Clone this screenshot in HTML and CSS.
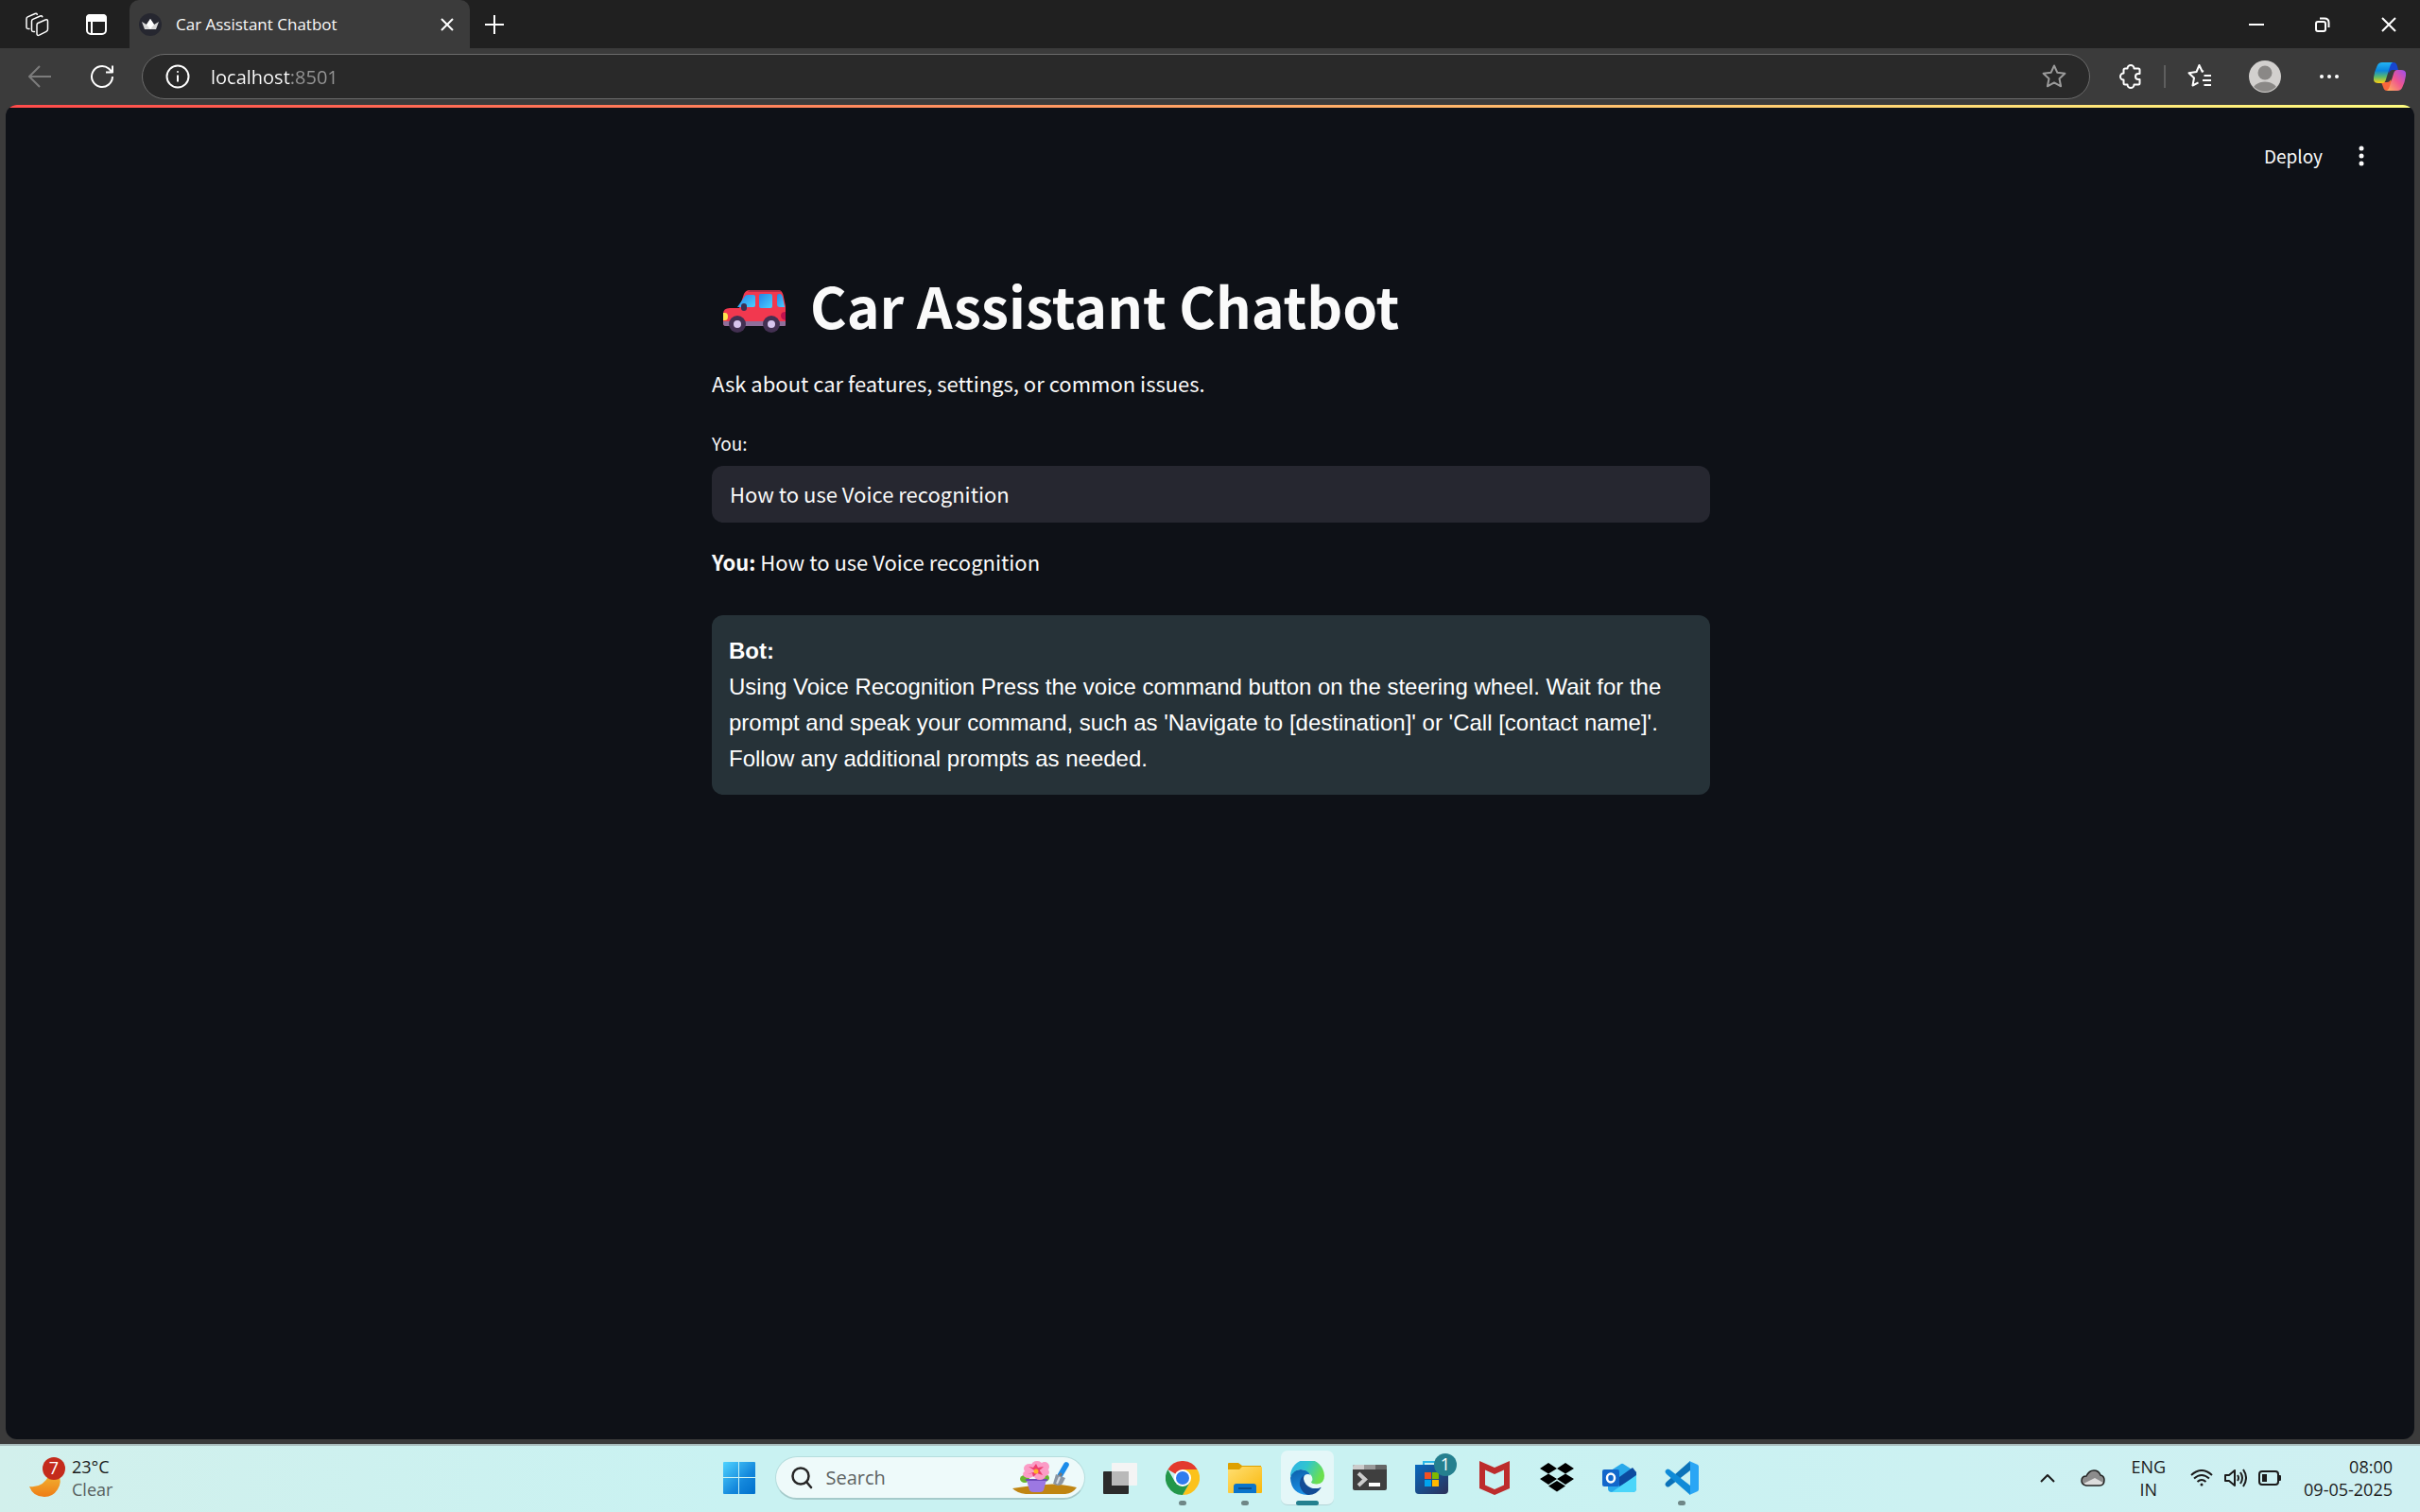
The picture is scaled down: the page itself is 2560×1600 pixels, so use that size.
FILE: index.html
```html
<!DOCTYPE html>
<html lang="en">
<head>
<meta charset="utf-8">
<title>Car Assistant Chatbot</title>
<link rel="stylesheet" href="styles.css">
</head>
<body>
<header class="browser">
  <div class="titlebar">
    <div class="tab-tools">
      <button class="icon-btn" aria-label="Workspaces"><svg width="26" height="26" viewBox="0 0 26 26" class="line thin"><path d="M14 11.500 22 8q2.500-.8 2.500 1.500V18q0 1.600-1.500 2.300l-7.500 3.800q-2.500 1-2.500-1.500V13.500q0-1.400 1-2z" /><path d="M10.500 20.500Q7.500 21 7.500 18.500V9.500Q7.500 8 8.800 7.400L16.500 4q1.800-.6 2.300.8"/><path d="M5 17.500Q2 18 2 15.500V7q0-1.500 1.300-2.100L11 1.500q1.800-.6 2.300.8"/></svg></button>
      <button class="icon-btn" aria-label="Tab actions"><svg width="24" height="24" viewBox="0 0 24 24" class="line"><rect x="2" y="2" width="20" height="20" rx="4"/><path d="M2 8V5q0-3 3-3h14q3 0 3 3v3z" fill="#fff"/><path d="M7 8v14"/></svg></button>
    </div>
    <div class="tab">
      <svg width="24" height="24" viewBox="0 0 24 24"><circle cx="12" cy="12" r="12" fill="#262730"/><path d="M3 9l5 3 4-6 4 6 5-3-3 8H6z" fill="#d8d8d8"/><path d="M12 6l4 6-4 5-4-5z" fill="#fff"/></svg>
      <span class="tab-title">Car Assistant Chatbot</span>
      <button class="icon-btn" aria-label="Close tab"><svg width="14" height="14" viewBox="0 0 14 14" class="line"><path d="M1 1l12 12M13 1 1 13"/></svg></button>
    </div>
    <button class="icon-btn new-tab" aria-label="New tab"><svg width="22" height="22" viewBox="0 0 22 22" class="line"><path d="M11 1v20M1 11h20"/></svg></button>
    <div class="window-controls">
      <button class="icon-btn" aria-label="Minimize"><svg width="16" height="16" viewBox="0 0 16 16" class="line"><path d="M0 8h16"/></svg></button>
      <button class="icon-btn" aria-label="Restore"><svg width="16" height="16" viewBox="0 0 16 16" class="line"><rect x="1" y="5" width="10" height="10" rx="2"/><path d="M5 1.500h5Q14.500 1.500 14.500 6v5"/></svg></button>
      <button class="icon-btn" aria-label="Close window"><svg width="16" height="16" viewBox="0 0 16 16" class="line"><path d="M1 1l14 14M15 1 1 15"/></svg></button>
    </div>
  </div>
  <div class="toolbar">
    <div class="nav">
      <button class="icon-btn" aria-label="Back"><svg width="24" height="24" viewBox="0 0 24 24" class="line dim"><path d="M12 1 1 12l11 11M1 12h23"/></svg></button>
      <button class="icon-btn" aria-label="Refresh"><svg width="26" height="26" viewBox="0 0 26 26" class="line"><path d="M24 13a11 11 0 1 1-4-8.500L23.500 8M24 1.500V8.500h-7"/></svg></button>
    </div>
    <div class="address">
      <button class="icon-btn" aria-label="Site information"><svg width="26" height="26" viewBox="0 0 26 26" class="line"><circle cx="13" cy="13" r="11.500"/><path d="M13 11.500v7"/><circle cx="13" cy="8" r="1" fill="#fff" stroke="none"/></svg></button>
      <input class="url" type="text" value="localhost:8501" aria-label="Address">
      <button class="icon-btn" aria-label="Add to favorites"><svg width="26" height="26" viewBox="0 0 26 26" class="line grey"><path d="M13 1.500l3.400 7.300 8 1-5.900 5.500 1.600 8L13 19.400l-7.100 3.900 1.600-8L1.600 9.800l8-1z"/></svg></button>
    </div>
    <div class="actions">
      <button class="icon-btn" aria-label="Extensions"><svg width="26" height="26" viewBox="0 0 26 26" class="line"><path d="M9.500 4.500a3.500 3.500 0 0 1 7 0H21q1.500 0 1.500 1.500v4h-1.500a3 3 0 0 0 0 6h1.500v4q0 1.500-1.500 1.500h-4.500a3.500 3.500 0 0 1-7 0H7q-1.500 0-1.500-1.500v-3.500a3.500 3.500 0 0 1 0-7V6q0-1.500 1.500-1.500z"/></svg></button>
      <span class="separator"></span>
      <button class="icon-btn" aria-label="Favorites"><svg width="26" height="26" viewBox="0 0 26 26" class="line"><path d="M16 9.500 12.500 2 9.500 9l-8 1.200 5.500 5.300-1.500 8 6-3.200M17 8.800l-1-.6M17.500 13H25M16 18h9M17.500 23H25" transform="translate(0 -1)"/></svg></button>
      <button class="icon-btn" aria-label="Profile"><svg width="34" height="34" viewBox="0 0 34 34"><defs><clipPath id="av"><circle cx="17" cy="17" r="16"/></clipPath></defs><circle cx="17" cy="17" r="17" fill="#d2d0ce"/><circle cx="17" cy="13" r="7.500" fill="#8a8886"/><ellipse cx="17" cy="33" rx="13.500" ry="10.500" fill="#8a8886" clip-path="url(#av)"/></svg></button>
      <button class="icon-btn" aria-label="Settings and more"><svg width="20" height="6" viewBox="0 0 20 6" fill="#fff"><circle cx="2" cy="3" r="2"/><circle cx="10" cy="3" r="2"/><circle cx="18" cy="3" r="2"/></svg></button>
      <button class="icon-btn" aria-label="Copilot"><svg width="34" height="32" viewBox="0 0 34 32"><defs><linearGradient id="c1" x2="0" y2="1"><stop stop-color="#22b4f4"/><stop offset=".4" stop-color="#0b86dc"/><stop offset=".7" stop-color="#5dbb6b"/><stop offset="1" stop-color="#ffcf10"/></linearGradient><linearGradient id="c2" x1="1" x2="0" y2="1"><stop stop-color="#9b4df0"/><stop offset=".5" stop-color="#f0568f"/><stop offset="1" stop-color="#ffb45a"/></linearGradient></defs><path d="M17 1h4q3 0 4 4l1 4h-6q-3 0-4 4l-2-8z" fill="#1646cf"/><path d="M17 31h-3q-3 0-4-4l-2-5h6q3 0 4-3l2 5z" fill="#f8663c"/><path d="M9 1h11q-2 1-3 5l-4 13q-1 4-4 4H5q-6 0-5-6Q1 10 3.500 5 5 1 9 1z" fill="url(#c1)"/><path d="M25 31H14q2-1 3-5l4-13q1-4 4-4h4q6 0 5 6-1 7-3.500 12Q29 31 25 31z" fill="url(#c2)"/></svg></button>
    </div>
  </div>
</header>

<main class="viewport">
  <div class="decoration"></div>
  <div class="app-bar">
    <button class="deploy">Deploy</button>
    <button class="icon-btn" aria-label="Main menu"><svg width="6" height="22" viewBox="0 0 6 22" fill="#fafafa"><circle cx="3" cy="3" r="2.500"/><circle cx="3" cy="11" r="2.500"/><circle cx="3" cy="19" r="2.500"/></svg></button>
  </div>
  <div class="content">
    <h1 class="title">
      <svg class="car" width="66" height="46" viewBox="0 0 66 46"><defs><linearGradient id="gl" x2="1" y2="1"><stop stop-color="#2585e8"/><stop offset="1" stop-color="#4bd0ff"/></linearGradient></defs><path d="M28 1h30q4 0 5.500 5L66 18v20q0 1-2 1H3q-3 0-3-3V33q0-3 7-4h7L22 5q2-4 6-4z" fill="#f2384f"/><path d="M0 36V26q0-6 7-6h59v16z" fill="#f2384f"/><path d="M28 1h30q3 0 4 2H26z" fill="#b52c48"/><path d="M26 6h6q2 0 2 2v9q0 2-2 2H15L22.500 8q1-2 3.500-2z" fill="url(#gl)"/><rect x="38" y="5" width="14" height="15" rx="2" fill="url(#gl)"/><path d="M57 7q0-2 2-2h1q2 0 3 4l2 10h-5q-3 0-3-3z" fill="url(#gl)"/><rect x="19" y="15" width="6" height="8" rx="3" fill="#3b2f52"/><path d="M0 34h66v4q0 1-2 1H3q-3 0-3-3z" fill="#8f6f9b"/><path d="M0 25h2q3 0 3 4t-3 4H0z" fill="#ffe34d"/><path d="M66 24q-5 0-5 4t5 5z" fill="#c1114f"/><circle cx="15" cy="37" r="9" fill="#433052"/><circle cx="51" cy="37" r="9" fill="#433052"/><circle cx="15" cy="37" r="4" fill="#d8c5ee"/><circle cx="51" cy="37" r="4" fill="#d8c5ee"/></svg>
      <span>Car Assistant Chatbot</span>
    </h1>
    <p class="intro">Ask about car features, settings, or common issues.</p>
    <div class="field">
      <label for="question">You:</label>
      <input id="question" type="text" value="How to use Voice recognition">
    </div>
    <p class="echo"><strong>You:</strong> How to use Voice recognition</p>
    <div class="bot"><strong>Bot:</strong><br>Using Voice Recognition Press the voice command button on the steering wheel. Wait for the prompt and speak your command, such as 'Navigate to [destination]' or 'Call [contact name]'. Follow any additional prompts as needed.</div>
  </div>
</main>

<footer class="taskbar">
  <button class="weather">
    <svg width="40" height="46" viewBox="0 0 40 46"><defs><linearGradient id="mo" x2="0" y2="1"><stop stop-color="#f2b632"/><stop offset="1" stop-color="#ee7d16"/></linearGradient></defs><path d="M1 32q14 2 21-12l10-2q4 9-1 17-5 8-14 8-12 0-16-11z" fill="url(#mo)"/><circle cx="27" cy="13" r="12" fill="#c42b1c"/><text x="27" y="19" class="badge-text">7</text></svg>
    <span class="stack"><span>23°C</span><span class="soft">Clear</span></span>
  </button>
  <nav class="dock">
    <button class="slot" aria-label="Start"><svg width="36" height="36" viewBox="0 0 36 36"><defs><linearGradient id="st" x2="1" y2="1"><stop stop-color="#4fd3ff"/><stop offset=".6" stop-color="#1488dc"/><stop offset="1" stop-color="#0070cc"/></linearGradient></defs><path d="M2 1h15v16H1V2q0-1 1-1zM18 1h16q1 0 1 1v15H18zM1 18h16v17H2q-1 0-1-1zM18 18h17v16q0 1-1 1H18z" fill="url(#st)"/></svg></button>
    <div class="search">
      <svg width="24" height="24" viewBox="0 0 24 24" fill="none" stroke="#262626" stroke-width="2.500" stroke-linecap="round"><circle cx="11" cy="10" r="8.500"/><path d="M17 16l5 6"/></svg>
      <input type="text" placeholder="Search" aria-label="Search">
      <svg width="68" height="36" viewBox="0 0 68 36"><path d="M0 29q18-3 28-3 16-4 40 2-4 6-12 7H14Q5 34 0 29z" fill="#c08512"/><ellipse cx="13" cy="19" rx="5" ry="4" fill="#69b52f"/><ellipse cx="34" cy="18" rx="5" ry="4" fill="#69b52f"/><path d="M15 20h21l-3 11q-1 2-4 2h-7q-3 0-4-2z" fill="#9c78e2"/><path d="M14 19h23v2H14z" fill="#6d49b8"/><g fill="#fb9cc6"><ellipse cx="18" cy="8" rx="6" ry="5"/><ellipse cx="26" cy="5" rx="6" ry="5"/><ellipse cx="34" cy="6" rx="5" ry="5"/><ellipse cx="34" cy="12" rx="5" ry="4"/><ellipse cx="29" cy="16" rx="6" ry="4"/><ellipse cx="17" cy="14" rx="6" ry="4"/></g><path d="M25 11l-8-5 5 1 3-4 2 4 6-1-4 4 3 5-6-2-4 4-1-4-5 1z" fill="#ee3f70"/><circle cx="25" cy="11" r="2.500" fill="#ffb427"/><path d="M54 13l7-12" stroke="#1b8cea" stroke-width="6" stroke-linecap="round" transform="translate(-1 3) scale(.95)"/><path d="M52 13l-3 4" stroke="#777" stroke-width="3"/><path d="M46 14l10 4-3 6q-4 4-10 0z" fill="#8b96a3"/><path d="M50 17l-3 7" stroke="#d8dee5" stroke-width="2"/></svg>
    </div>
    <button class="slot" aria-label="Task view"><svg width="36" height="36" viewBox="0 0 36 36"><rect y="11" width="27" height="24" rx="1" fill="#2b2b2b"/><rect x="9" y="2" width="27" height="24" rx="1" fill="#f4f4f4"/><path d="M9 11h18v15H9z" fill="#b9b9b9"/></svg></button>
    <button class="slot running" aria-label="Chrome"><svg width="36" height="36" viewBox="0 0 36 36"><path d="M18 18 2.400 9A18 18 0 0 1 33.600 9z" fill="#e33b2e"/><path d="M18 9h15.600A18 18 0 0 1 18 36l7.800-13.500z" fill="#fcc21b"/><path d="M10.200 22.500 2.400 9A18 18 0 0 0 18 36l7.800-13.500z" fill="#23974a"/><circle cx="18" cy="18" r="9" fill="#fff"/><circle cx="18" cy="18" r="7" fill="#2f7bee"/></svg></button>
    <button class="slot running" aria-label="File Explorer"><svg width="36" height="36" viewBox="0 0 36 36"><defs><linearGradient id="fo" x2="1" y2="1"><stop stop-color="#ffdf73"/><stop offset="1" stop-color="#f9b80c"/></linearGradient></defs><path d="M0 3q0-1 1-1h10l4 3h20v5H0z" fill="#dea000"/><path d="M0 9h12l3-3h20q1 0 1 1v26q0 1-1 1H1q-1 0-1-1z" fill="url(#fo)"/><path d="M6 34V27q0-3 3-3h18q3 0 3 3v7z" fill="#0a74cb"/><path d="M11 29h14" stroke="#0b4d8a" stroke-width="2"/></svg></button>
    <button class="slot current" aria-label="Edge"><svg width="36" height="36" viewBox="0 0 36 36"><defs><linearGradient id="e1" x2="1" y2=".4"><stop stop-color="#2fb0ea"/><stop offset=".5" stop-color="#30c5cf"/><stop offset="1" stop-color="#6be04e"/></linearGradient><linearGradient id="e2" x2=".3" y2="1"><stop stop-color="#0c5ea8"/><stop offset="1" stop-color="#1b90e6"/></linearGradient></defs><path d="M0 18Q1 9 11 9q9 0 10 6-5 0-7 4 0 9 9 15-2 2-5 2Q1 35 0 18z" fill="url(#e2)"/><path d="M14 15q-5 5-4 11 2 8 9 10 9 0 14-8.500Q28 30 23 28q-8-3-9-13z" fill="#114b96"/><path d="M0 17A18 18 0 0 1 36 15.500Q36 24 28 24.500q-5 0-6-1.500 0-1 1-2 1-2-.5-5Q18 9 11 9 4 9 0 17z" fill="url(#e1)"/><path d="M14 19q0-5 4.500-5 3.500 0 4 4 0 2-1 3-.5 2 2.500 3 6 2 9.500 1.500 1 1-.5 2Q27 30 22 28.500q-7-3-8-9.500z" fill="#e8f8f8"/></svg></button>
    <button class="slot" aria-label="Terminal"><svg width="36" height="36" viewBox="0 0 36 36"><rect y="4" width="36" height="27" rx="2" fill="#3f3f3f"/><path d="M2 4h10v5H0V6q0-2 2-2z" fill="#ccc"/><path d="M12 4h12v5H12z" fill="#999"/><path d="M24 4h10q2 0 2 2v3H24z" fill="#666"/><path d="M6 13l7 6.500L6 26" fill="none" stroke="#ccc" stroke-width="4"/><path d="M17 23h12v4H17z" fill="#fff"/></svg></button>
    <button class="slot badged" aria-label="Microsoft Store"><svg width="36" height="36" viewBox="0 8 36 36"><defs><linearGradient id="ms" x2="1" y2="1"><stop stop-color="#0869be"/><stop offset="1" stop-color="#2b3058"/></linearGradient></defs><path d="M9 16V9h17v7" fill="none" stroke="#2bb8ea" stroke-width="2"/><path d="M0 12h35v27q0 4-4 4H4q-4 0-4-4z" fill="url(#ms)"/><path d="M10 20h7v7h-7z" fill="#f25022"/><path d="M18 20h7v7h-7z" fill="#7fba00"/><path d="M10 28h7v7h-7z" fill="#00a4ef"/><path d="M18 28h7v7h-7z" fill="#ffb900"/><circle cx="32" cy="12" r="12" fill="#25808f"/><text x="32" y="18" class="badge-text">1</text></svg></button>
    <button class="slot" aria-label="McAfee"><svg width="32" height="36" viewBox="0 0 32 36"><path fill-rule="evenodd" d="M0 0l16 7L32 0v29l-16 7-16-7zM6 9.500v16l10 4.500 10-4.500v-16L16 14z" fill="#bd2c2c"/></svg></button>
    <button class="slot" aria-label="Dropbox"><svg width="36" height="36" viewBox="0 0 36 36"><path d="M9 2l9 6-9 5.500L0 8zM27 2l9 6-9 5.500L18 8zM9 13.500l9 5.500-9 6-9-6zM27 13.500l9 5.500-9 6-9-6zM18 21l9 5.500-9 6-9-6z"/></svg></button>
    <button class="slot" aria-label="Outlook"><svg width="36" height="36" viewBox="0 0 36 36"><path d="M6 12 20 3q1-.6 2 0l14 9v17q0 4-4 4H10q-4 0-4-4z" fill="#29a9ea"/><path d="M18 17 32 7l4 5v5L18 27z" fill="#0c4ba0"/><path d="M36 15v14q0 4-4 4H10z" fill="#4bd6fa"/><rect y="9" width="18" height="18" rx="2" fill="#1267cb"/><ellipse cx="9" cy="18" rx="4" ry="4.500" fill="none" stroke="#fff" stroke-width="2.500"/></svg></button>
    <button class="slot running" aria-label="Visual Studio Code"><svg width="36" height="36" viewBox="0 0 36 36"><path d="M2 22q-3 3 0 5 1 1 3 0L27 10V0z" fill="#0b72b9"/><path d="M2 14q-3-3 0-5 1-1 3 0l22 17v10z" fill="#0f8bd8"/><path d="M26 0l9 4q1 1 1 2v24q0 1-1 2l-9 4q1-1 1-3V3z" fill="#2aa6f5"/></svg></button>
  </nav>
  <div class="tray">
    <button class="icon-btn" aria-label="Show hidden icons"><svg width="16" height="10" viewBox="0 0 16 10" class="ink"><path d="M1 9l7-7 7 7"/></svg></button>
    <button class="icon-btn" aria-label="OneDrive"><svg width="26" height="18" viewBox="0 0 26 18"><path d="M6 17q-5-1-5-5 0-5 5-5 3-6 8-6t7 5q4 1 4 5 0 6-5 6z" fill="#8c8c8c"/><path d="M3 15l12-6 9 5q-1 3-4 3H6z" fill="#ddd"/><path d="M6 17q-5-1-5-5 0-5 5-5 3-6 8-6t7 5q4 1 4 5 0 6-5 6z" fill="none" stroke="#222" stroke-width="1.500"/></svg></button>
    <button class="stack lang"><span>ENG</span><span>IN</span></button>
    <button class="status" aria-label="Network, volume and battery">
      <svg width="24" height="18" viewBox="0 0 24 18" class="ink"><path d="M1 6q11-10 22 0M4 9.500q8-7 16 0M7.500 13q4.500-4 9 0"/><circle cx="12" cy="16" r="1.500" fill="#1b1b1b" stroke="none"/></svg>
      <svg width="24" height="20" viewBox="0 0 24 20" class="ink"><path d="M1 7h4l6-5v16l-6-5H1zM14 7q2 3 0 6M17 4q4 6 0 12M20 1q6 9 0 18"/></svg>
      <svg width="24" height="16" viewBox="0 0 24 16" class="ink"><rect x="1" y="1" width="20" height="14" rx="3"/><path d="M4 4h5v8H4z" fill="#1b1b1b" stroke="none"/><path d="M22 6h1v4h-1z"/></svg>
    </button>
    <button class="stack clock"><span>08:00</span><span>09-05-2025</span></button>
  </div>
</footer>
</body>
</html>
```
FILE: styles.css
```css
* { box-sizing: border-box; }
body {
  margin: 0;
  min-height: 100vh;
  display: flex;
  flex-direction: column;
  background: #3b3b3b;
  color: #fafafa;
  font-family: "Open Sans", "Noto Sans", sans-serif;
}
button, input { font: inherit; color: inherit; border: 0; background: none; padding: 0; outline: 0; }
svg { display: block; flex: none; }
.line { fill: none; stroke: #fff; stroke-width: 2; stroke-linejoin: round; }
.thin { stroke-width: 1.5; stroke-linecap: round; }
.dim { stroke: #7c7c7c; }
.grey { stroke: #9a9a9a; }
.ink { fill: none; stroke: #1b1b1b; stroke-width: 2; stroke-linejoin: round; }
.icon-btn { display: flex; align-items: center; justify-content: center; }

/* Browser chrome */
.titlebar { display: flex; align-items: center; height: 51px; background: #202020; }
.tab-tools { display: flex; gap: 38px; padding: 0 23px 0 26px; }
.tab {
  display: flex;
  align-items: center;
  align-self: stretch;
  width: 360px;
  padding: 0 17px 0 10px;
  gap: 15px;
  background: #3b3b3b;
  border-radius: 10px 10px 0 0;
}
.tab-title { flex: 1; font-size: 17px; white-space: nowrap; }
.new-tab { margin-left: 15px; }
.window-controls { display: flex; gap: 54px; margin-left: auto; padding-right: 25px; }
.toolbar { display: flex; align-items: center; height: 60px; padding-left: 30px; background: #3b3b3b; }
.nav { display: flex; align-items: center; gap: 41px; }
.address {
  flex: 1;
  display: flex;
  align-items: center;
  height: 48px;
  margin-left: 29px;
  padding: 0 24px;
  gap: 22px;
  background: #292929;
  border: 1px solid #6b6b6b;
  border-radius: 24px;
}
.url {
  flex: 1;
  font-size: 20px;
  background: linear-gradient(90deg, #fff 84px, #969696 84px);
  -webkit-background-clip: text;
  background-clip: text;
  -webkit-text-fill-color: transparent;
}
.actions { display: flex; align-items: center; padding: 0 15px 0 30px; }
.separator { width: 2px; height: 24px; margin: 0 23px 0 22px; background: #5e5e5e; }
.actions .separator + .icon-btn { margin-right: 39px; }
.actions .separator + .icon-btn + .icon-btn { margin-right: 41px; }
.actions .icon-btn:last-child { margin-left: 37px; }

/* App */
.viewport {
  flex: 1;
  margin: 0 6px 5px;
  overflow: hidden;
  background: #0e1117;
  border-radius: 12px;
  font-family: "Noto Sans CJK JP", sans-serif;
}
.decoration { height: 3px; background: linear-gradient(90deg, #ff4b4b, #fffd80); }
.app-bar { display: flex; justify-content: flex-end; align-items: center; gap: 38px; height: 102px; padding-right: 53px; }
.deploy { padding-bottom: 2px; font-size: 19px; }
.content { width: 100%; max-width: 1058px; margin: 0 auto; padding: 63px 0 0 2px; }
.title { display: flex; align-items: center; gap: 26px; margin: 0; padding-left: 12px; font-size: 59px; line-height: 88px; font-weight: 700; white-space: nowrap; }
.car { margin-top: 12px; }
.intro, .echo { margin: 0; font-size: 22px; line-height: 38px; }
.intro { margin-top: 19px; }
.field { display: flex; flex-direction: column; gap: 6px; margin-top: 27px; }
.field label { font-size: 19px; line-height: 36px; }
.field input { height: 60px; padding: 0 19px 2px; font-size: 22px; background: #262730; border-radius: 12px; }
.echo { margin-top: 22px; }
.bot {
  margin-top: 38px;
  padding: 19px 18px;
  background: #263238;
  border-radius: 12px;
  color: #fff;
  font-family: "Liberation Sans", Arial, sans-serif;
  font-size: 24px;
  line-height: 38px;
}

/* Taskbar */
.taskbar {
  display: grid;
  grid-template-columns: 1fr auto 1fr;
  align-items: center;
  height: 72px;
  padding-bottom: 2px;
  border-top: 2px solid #a9bdbd;
  background: linear-gradient(90deg, #d2f0ec, #c9f2f2 30%, #c9f2f2 60%, #cff0f2);
  color: #1b1b1b;
  font-size: 18px;
  line-height: 24px;
}
.weather { display: flex; align-items: center; gap: 6px; padding-left: 30px; text-align: left; }
.stack { display: flex; flex-direction: column; }
.soft { color: #56605f; }
.badge-text { font: 18px "Open Sans", sans-serif; fill: #fff; text-anchor: middle; }
.dock { display: flex; align-items: center; }
.slot { position: relative; display: flex; align-items: center; justify-content: center; width: 66px; height: 58px; }
.badged svg { overflow: visible; }
.search {
  display: flex;
  align-items: center;
  width: 328px;
  height: 46px;
  margin: 0 4px 0 5px;
  padding: 0 8px 0 15px;
  gap: 14px;
  background: #eefafa;
  border: 1px solid #b5dddd;
  border-bottom: 2px solid #a5caca;
  border-radius: 23px;
}
.search input { flex: 1; min-width: 0; font-size: 20px; }
.search input::placeholder { color: #5d6262; opacity: 1; }
.current::before { content: ""; position: absolute; inset: 0 5px; z-index: 0; background: #e4f7f8; border-radius: 7px; border-bottom: 1px solid #b5d6d8; }
.current svg { position: relative; }
.running::after, .current::after { content: ""; position: absolute; bottom: 0; left: 50%; width: 8px; height: 5px; margin-left: -4px; border-radius: 3px; background: #6f8787; }
.current::after { width: 24px; margin-left: -12px; background: #23808f; }
.tray { display: flex; align-items: center; justify-content: flex-end; padding-right: 29px; }
.tray .icon-btn { margin-right: 27px; }
.lang { align-items: center; margin-right: 26px; }
.status { display: flex; align-items: center; gap: 12px; margin-right: 24px; }
.clock { align-items: flex-end; }
```
